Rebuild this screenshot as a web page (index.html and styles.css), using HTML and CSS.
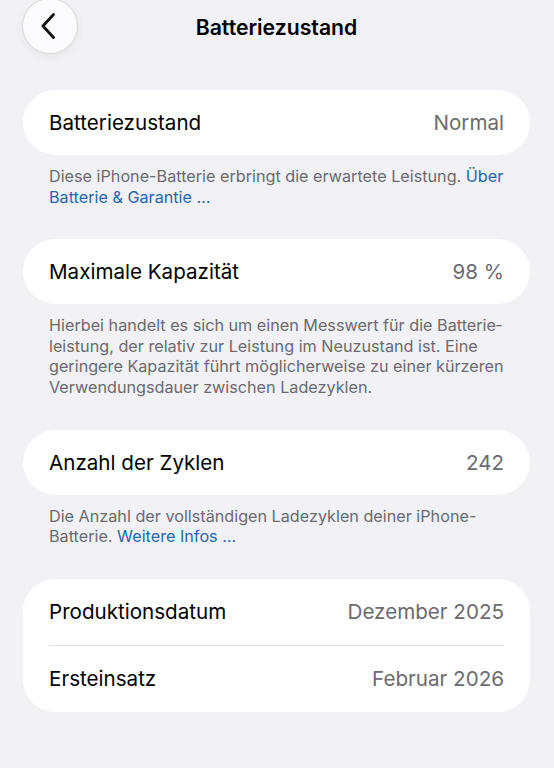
FILE: index.html
```html
<!DOCTYPE html>
<html lang="de">
<head>
<meta charset="utf-8">
<link rel="stylesheet" href="styles.css">
</head>
<body>
<div class="page">
  <header class="nav">
    <button class="back" aria-label="Zurück">
      <svg width="20" height="26" viewBox="0 0 20 26"><path d="M14.5 1.5 L4 13 L14.5 24.5" fill="none" stroke="#111" stroke-width="2.8" stroke-linecap="round" stroke-linejoin="round"/></svg>
    </button>
    <h1 class="title">Batteriezustand</h1>
  </header>

  <section class="group">
    <div class="card">
      <div class="row"><span class="label">Batteriezustand</span><span class="value">Normal</span></div>
    </div>
    <p class="note">Diese iPhone-Batterie erbringt die erwartete Leistung. <a class="link">Über Batterie &amp; Garantie …</a></p>
  </section>

  <section class="group">
    <div class="card">
      <div class="row"><span class="label">Maximale Kapazität</span><span class="value">98 %</span></div>
    </div>
    <p class="note">Hierbei handelt es sich um einen Messwert für die Batterie­leistung, der relativ zur Leistung im Neuzustand ist. Eine geringere Kapazität führt möglicherweise zu einer kürzeren Verwendungsdauer zwischen Ladezyklen.</p>
  </section>

  <section class="group">
    <div class="card">
      <div class="row"><span class="label">Anzahl der Zyklen</span><span class="value">242</span></div>
    </div>
    <p class="note">Die Anzahl der vollständigen Ladezyklen deiner iPhone-Batterie. <a class="link">Weitere Infos …</a></p>
  </section>

  <section class="group">
    <div class="card card-list">
      <div class="row"><span class="label">Produktionsdatum</span><span class="value">Dezember 2025</span></div>
      <div class="divider"></div>
      <div class="row"><span class="label">Ersteinsatz</span><span class="value">Februar 2026</span></div>
    </div>
  </section>
</div>
</body>
</html>
```

FILE: styles.css
```css
* { box-sizing: border-box; }
html, body { margin: 0; padding: 0; }
body {
  background: #f1f1f6;
  font-family: Inter, "Noto Sans", "Liberation Sans", sans-serif;
  color: #000;
  width: 554px;
  height: 768px;
  overflow: hidden;
}
.page {
  padding: 0 24px 0 23px;
}
.nav {
  position: relative;
  height: 90px;
  display: flex;
  justify-content: center;
}
.back {
  position: absolute;
  left: -1px;
  top: -2px;
  width: 56px;
  height: 56px;
  border-radius: 50%;
  border: 1px solid #d9d9dd;
  background: #fbfbfd;
  box-shadow: 0 3px 8px rgba(0,0,0,0.06);
  display: flex;
  align-items: center;
  justify-content: center;
  padding: 0 3px 0 0;
}
.title {
  margin: 14px 0 0;
  font-size: 21.2px;
  font-weight: 600;
  line-height: 26px;
  letter-spacing: 0;
}
.group {
  margin-bottom: 32px;
}
.card {
  background: #fff;
  border-radius: 33px;
  padding: 0 26px;
}
.card-list {
  border-radius: 32px;
}
.row {
  height: 65px;
  display: flex;
  align-items: center;
  justify-content: space-between;
  font-size: 20.6px;
  letter-spacing: 0;
}
.card-list .row { height: 66px; }
.value {
  color: #6b6b70;
}
.divider {
  height: 1px;
  background: #e2e2e6;
}
.note {
  margin: 11px 12px 0 26px;
  font-size: 16.2px;
  line-height: 20.6px;
  color: #6b6b70;
  letter-spacing: 0;
}
.link {
  color: #2767ad;
}
```
